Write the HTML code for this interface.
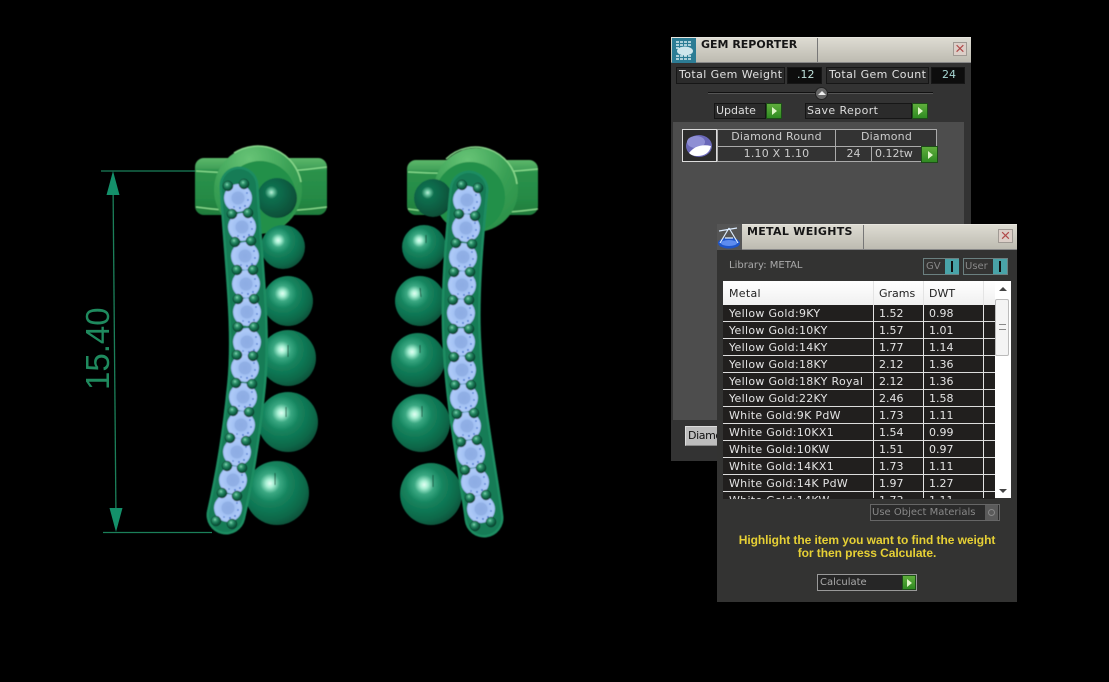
<!DOCTYPE html>
<html><head><meta charset="utf-8"><style>
html,body{margin:0;padding:0;background:#000;width:1109px;height:682px;overflow:hidden}
body{position:relative;font-family:"DejaVu Sans","Liberation Sans",sans-serif;font-size:11px;color:#ddd}
.a{position:absolute;box-sizing:border-box}
.t{position:absolute;white-space:nowrap;line-height:14px}
.box{position:absolute;box-sizing:border-box;border:1px solid #161616;background:#2b2b2b}
.g{position:absolute;box-sizing:border-box;background:linear-gradient(#5fae3c,#2f8a22);border:1px solid #1d4d18}
.g:after{content:"";position:absolute;left:50%;top:50%;margin:-4px 0 0 -2px;border-left:5px solid #dff5c8;border-top:4px solid transparent;border-bottom:4px solid transparent}
.title{background:linear-gradient(#dddbd2,#bdbbb1);border-top:1px solid #e8e6df;border-bottom:1px solid #888}
.x{position:absolute;box-sizing:border-box;border:1px solid #a09a94;background:#dccfc8;color:#b04848;text-align:center;font-size:17px;line-height:12px;font-family:"Liberation Sans",sans-serif}
.r{position:absolute;left:723px;width:272px;height:17px;background:#211f1e;border-bottom:1px solid #ddd;box-sizing:border-box;color:#e4e4e4}
.r span{position:absolute;top:2px;line-height:14px;white-space:nowrap}
.r span:nth-child(1){left:6px;letter-spacing:.3px}.r span:nth-child(2){left:156px}.r span:nth-child(3){left:206px}
</style></head><body>

<svg class="a" style="left:0;top:0" width="660" height="682" viewBox="0 0 660 682">
<defs>
<filter id="soft" x="-5%" y="-5%" width="110%" height="110%"><feGaussianBlur stdDeviation=".55"/></filter>
<radialGradient id="s" cx=".39" cy=".35" r=".78">
<stop offset="0" stop-color="#e4fff4"/><stop offset=".08" stop-color="#a8f0d4"/><stop offset=".2" stop-color="#3aa882"/><stop offset=".38" stop-color="#14845e"/><stop offset=".72" stop-color="#0d6849"/><stop offset=".93" stop-color="#0a4a35"/><stop offset="1" stop-color="#04241a"/>
</radialGradient>
<radialGradient id="sd" cx=".36" cy=".36" r=".8">
<stop offset="0" stop-color="#c0f2dc"/><stop offset=".08" stop-color="#68c4a0"/><stop offset=".2" stop-color="#11704f"/><stop offset=".8" stop-color="#0a4f38"/><stop offset="1" stop-color="#05281c"/>
</radialGradient>
<radialGradient id="p" cx=".4" cy=".35" r=".7">
<stop offset="0" stop-color="#8fe0bc"/><stop offset=".22" stop-color="#3a9e78"/><stop offset=".55" stop-color="#156f4e"/><stop offset="1" stop-color="#07392a"/>
</radialGradient>
<radialGradient id="gm" cx=".5" cy=".5" r=".5">
<stop offset="0" stop-color="#8fb0e8"/><stop offset=".45" stop-color="#a0bff2"/><stop offset=".85" stop-color="#aecaf8"/><stop offset="1" stop-color="#9cbcf4"/>
</radialGradient>
<linearGradient id="band" x1="0" y1="0" x2="0" y2="1">
<stop offset="0" stop-color="#5cb86a"/><stop offset=".17" stop-color="#44a25a"/><stop offset=".22" stop-color="#2b924b"/><stop offset=".7" stop-color="#258a45"/><stop offset="1" stop-color="#1f7c3c"/>
</linearGradient>
<radialGradient id="disc" cx=".4" cy=".15" r=".9">
<stop offset="0" stop-color="#68c476"/><stop offset=".55" stop-color="#389f54"/><stop offset="1" stop-color="#2a9049"/>
</radialGradient>
<g id="gem">
<circle r="14" fill="url(#gm)"/>
<circle r="6.500" fill="#8cabe2" opacity=".75"/>
<g fill="#3f6cc8" opacity=".85">
<circle cx="9" cy="-5" r=".9"/><circle cx="10" cy="2" r=".9"/><circle cx="7" cy="8" r="1"/><circle cx="2" cy="10" r="1"/><circle cx="-4" cy="9" r=".8"/>
</g>
</g>
<circle id="pr" r="5" fill="url(#p)" stroke="#062d20" stroke-width=".5"/>
</defs>

<!-- dimension -->
<g stroke="#1b7f59" fill="none">
<path d="M101 171H198M103 532.5H212" stroke-width="1.2"/>
<path d="M113 180L116 520" stroke-width="1.3"/>
</g>
<path d="M113 171L106.500 195H119.500Z M116 532L109.500 508H122.500Z" fill="#14906a"/>
<text transform="translate(109,390) rotate(-90)" font-family="Liberation Sans,sans-serif" font-size="33" fill="#1f8a5e">15.40</text>

<g filter="url(#soft)">
<!-- left earring -->
<rect x="195" y="158" width="132" height="57" rx="9" fill="url(#band)"/>
<path d="M196 171Q260 176 327 167M196 207Q260 216 327 207" stroke="#8ade8f" stroke-width="1.300" fill="none"/>
<circle cx="258" cy="190" r="44" fill="url(#disc)"/>
<circle cx="260" cy="197" r="36" fill="#23904a"/>
<path d="M234 153A44 44 0 0 1 301 182" stroke="#88d88c" stroke-width="1.500" fill="none"/>
<circle cx="283" cy="247" r="22" fill="url(#s)"/>
<circle cx="288" cy="301" r="25" fill="url(#s)"/>
<circle cx="288" cy="358" r="28" fill="url(#s)"/>
<circle cx="288" cy="422" r="30" fill="url(#s)"/>
<circle cx="277" cy="493" r="32" fill="url(#s)"/>
<circle cx="277" cy="198" r="20" fill="url(#sd)"/>
<path d="M288 345V357M286 407V417M275 473V485" stroke="#0a4a34" stroke-width="1"/>
<path d="M239 186C243 260 253 330 246 390C241 440 234 480 226 515" stroke="#1f8d62" stroke-width="39" stroke-linecap="round" fill="none"/>
<path d="M239 186C243 260 253 330 246 390C241 440 234 480 226 515" stroke="#127c56" stroke-width="34" stroke-linecap="round" fill="none"/>
<use href="#gem" x="238" y="198"/><use href="#gem" x="242" y="227"/><use href="#gem" x="245" y="256"/><use href="#gem" x="246" y="284"/><use href="#gem" x="247" y="312"/><use href="#gem" x="247" y="342"/><use href="#gem" x="245" y="368"/><use href="#gem" x="243" y="397"/><use href="#gem" x="241" y="425"/><use href="#gem" x="237" y="452"/><use href="#gem" x="233" y="480"/><use href="#gem" x="228" y="508"/>
<use href="#pr" x="228" y="186"/><use href="#pr" x="244" y="184"/><use href="#pr" x="232" y="214"/><use href="#pr" x="248" y="213"/><use href="#pr" x="235" y="242"/><use href="#pr" x="251" y="241"/><use href="#pr" x="237" y="270"/><use href="#pr" x="253" y="270"/><use href="#pr" x="238" y="299"/><use href="#pr" x="254" y="299"/><use href="#pr" x="238" y="327"/><use href="#pr" x="254" y="327"/><use href="#pr" x="237" y="355"/><use href="#pr" x="253" y="356"/><use href="#pr" x="236" y="383"/><use href="#pr" x="252" y="384"/><use href="#pr" x="233" y="411"/><use href="#pr" x="249" y="412"/><use href="#pr" x="230" y="438"/><use href="#pr" x="246" y="441"/><use href="#pr" x="227" y="466"/><use href="#pr" x="242" y="468"/><use href="#pr" x="222" y="493"/><use href="#pr" x="237" y="496"/><use href="#pr" x="216" y="521"/><use href="#pr" x="232" y="524"/>

<!-- right earring -->
<rect x="407" y="160" width="131" height="55" rx="9" fill="url(#band)"/>
<path d="M408 172Q470 176 538 169M408 209Q470 218 538 209" stroke="#8ade8f" stroke-width="1.300" fill="none"/>
<circle cx="476" cy="190" r="42" fill="url(#disc)"/>
<circle cx="470" cy="197" r="35" fill="#23904a"/>
<path d="M446 159A42 42 0 0 1 517 184" stroke="#88d88c" stroke-width="1.500" fill="none"/>
<circle cx="433" cy="198" r="19" fill="url(#sd)"/>
<circle cx="424" cy="247" r="22" fill="url(#s)"/>
<circle cx="420" cy="301" r="25" fill="url(#s)"/>
<circle cx="418" cy="360" r="27" fill="url(#s)"/>
<circle cx="421" cy="423" r="29" fill="url(#s)"/>
<circle cx="431" cy="494" r="31" fill="url(#s)"/>
<path d="M426 235V243M420 288L421 297M420 345V353M422 406V417M433 475V487" stroke="#0a4a34" stroke-width="1"/>
<path d="M469 190C464 240 459 300 462 345C465 410 478 470 484 518" stroke="#1f8d62" stroke-width="39" stroke-linecap="round" fill="none"/>
<path d="M469 190C464 240 459 300 462 345C465 410 478 470 484 518" stroke="#127c56" stroke-width="34" stroke-linecap="round" fill="none"/>
<use href="#gem" x="467" y="200"/><use href="#gem" x="466" y="228"/><use href="#gem" x="463" y="257"/><use href="#gem" x="462" y="285"/><use href="#gem" x="461" y="313"/><use href="#gem" x="461" y="342"/><use href="#gem" x="462" y="370"/><use href="#gem" x="464" y="398"/><use href="#gem" x="467" y="426"/><use href="#gem" x="471" y="454"/><use href="#gem" x="475" y="482"/><use href="#gem" x="481" y="509"/>
<use href="#pr" x="462" y="185"/><use href="#pr" x="478" y="188"/><use href="#pr" x="459" y="214"/><use href="#pr" x="475" y="216"/><use href="#pr" x="456" y="243"/><use href="#pr" x="472" y="244"/><use href="#pr" x="454" y="272"/><use href="#pr" x="470" y="272"/><use href="#pr" x="453" y="300"/><use href="#pr" x="469" y="300"/><use href="#pr" x="453" y="329"/><use href="#pr" x="469" y="329"/><use href="#pr" x="454" y="357"/><use href="#pr" x="470" y="357"/><use href="#pr" x="455" y="385"/><use href="#pr" x="471" y="385"/><use href="#pr" x="457" y="414"/><use href="#pr" x="474" y="413"/><use href="#pr" x="461" y="442"/><use href="#pr" x="477" y="440"/><use href="#pr" x="465" y="470"/><use href="#pr" x="481" y="468"/><use href="#pr" x="470" y="498"/><use href="#pr" x="486" y="495"/><use href="#pr" x="475" y="526"/><use href="#pr" x="491" y="522"/>
</g>
</svg>

<!-- GEM REPORTER -->
<div class="a" style="left:671px;top:37px;width:300px;height:424px;background:#333"></div>
<div class="a title" style="left:671px;top:37px;width:300px;height:26px"></div>
<div class="a" style="left:817px;top:38px;width:1px;height:24px;background:#777"></div>
<svg class="a" style="left:672px;top:38px" width="24" height="25" viewBox="0 0 24 25">
<rect width="24" height="25" fill="#2c7c94"/>
<path d="M4 4H20M4 7H20M4 10H11M4 18H20M4 21H20" stroke="#d8ecf2" stroke-width="1.400" stroke-dasharray="3 1"/>
<ellipse cx="13" cy="13" rx="8" ry="4.500" fill="#cfe6ec"/>
</svg>
<div class="t" style="left:701px;top:38px;font-weight:bold;color:#161616;font-size:11px">GEM REPORTER</div>
<div class="x" style="left:953px;top:42px;width:14px;height:14px">×</div>

<div class="box" style="left:676px;top:67px;width:109px;height:17px"></div>
<div class="t" style="left:679px;top:68px;color:#e2e2e2;letter-spacing:.4px">Total Gem Weight</div>
<div class="box" style="left:787px;top:67px;width:35px;height:17px;background:#0d0d0d"></div>
<div class="t" style="left:797px;top:68px;color:#bfe0da">.12</div>
<div class="box" style="left:826px;top:67px;width:103px;height:17px"></div>
<div class="t" style="left:829px;top:68px;color:#e2e2e2;letter-spacing:.4px">Total Gem Count</div>
<div class="box" style="left:931px;top:67px;width:34px;height:17px;background:#0d0d0d"></div>
<div class="t" style="left:942px;top:68px;color:#a8d8d4">24</div>

<div class="a" style="left:708px;top:92px;width:225px;height:2px;background:#111;border-bottom:1px solid #555"></div>
<div class="a" style="left:815px;top:87px;width:13px;height:13px;border-radius:50%;background:#666;border:1px solid #222"></div>
<div class="a" style="left:818px;top:91px;border-left:4px solid transparent;border-right:4px solid transparent;border-bottom:4px solid #eee"></div>

<div class="box" style="left:714px;top:103px;width:52px;height:16px"></div>
<div class="t" style="left:716px;top:104px">Update</div>
<div class="g" style="left:766px;top:103px;width:16px;height:16px"></div>
<div class="box" style="left:805px;top:103px;width:107px;height:16px"></div>
<div class="t" style="left:807px;top:104px;letter-spacing:.4px">Save Report</div>
<div class="g" style="left:912px;top:103px;width:16px;height:16px"></div>

<div class="a" style="left:673px;top:122px;width:291px;height:298px;background:#4d4d4d"></div>
<div class="a" style="left:682px;top:129px;width:35px;height:33px;background:#2c2c2c;border:1px solid #ddd"></div>
<svg class="a" style="left:683px;top:131px" width="33" height="30" viewBox="0 0 33 30">
<ellipse cx="16" cy="15" rx="13" ry="11" fill="#6a68b8"/>
<ellipse cx="13" cy="11" rx="9" ry="6" fill="#8f8fd4"/>
<path d="M6 22Q14 12 28 15Q26 25 14 25Q9 25 6 22Z" fill="#fff"/>
</svg>
<div class="a" style="left:717px;top:129px;width:220px;height:33px;background:#333;border:1px solid #aaa"></div>
<div class="a" style="left:718px;top:146px;width:218px;height:1px;background:#aaa"></div>
<div class="a" style="left:835px;top:130px;width:1px;height:31px;background:#aaa"></div>
<div class="a" style="left:871px;top:147px;width:1px;height:14px;background:#aaa"></div>
<div class="t" style="left:718px;top:130px;width:117px;text-align:center;color:#ccc;letter-spacing:.2px">Diamond Round</div>
<div class="t" style="left:836px;top:130px;width:101px;text-align:center;color:#ccc;letter-spacing:.2px">Diamond</div>
<div class="t" style="left:718px;top:147px;width:117px;text-align:center;color:#ccc;letter-spacing:.2px">1.10 X 1.10</div>
<div class="t" style="left:836px;top:147px;width:35px;text-align:center;color:#ccc">24</div>
<div class="t" style="left:875px;top:147px;color:#ccc">0.12tw</div>
<div class="g" style="left:921px;top:146px;width:17px;height:17px"></div>

<div class="a" style="left:685px;top:426px;width:40px;height:20px;background:#bdbdbd;border:1px solid #8a8a8a;border-top-color:#ddd;border-left-color:#ddd"></div>
<div class="t" style="left:688px;top:429px;color:#111;letter-spacing:-.4px">Diamo</div>

<!-- METAL WEIGHTS -->
<div class="a" style="left:717px;top:224px;width:300px;height:378px;background:#333332"></div>
<div class="a title" style="left:742px;top:224px;width:275px;height:26px"></div>
<div class="a" style="left:717px;top:224px;width:25px;height:26px;background:#555"></div>
<div class="a" style="left:863px;top:225px;width:1px;height:24px;background:#777"></div>
<svg class="a" style="left:717px;top:225px" width="25" height="25" viewBox="0 0 25 25">
<ellipse cx="12" cy="18" rx="11" ry="5.500" fill="#1f55c8"/>
<path d="M12 3L3 18M12 3L21 18M2 6L20 3M8 13H16" stroke="#dcecff" stroke-width="1.200" fill="none"/>
<ellipse cx="12" cy="18" rx="8" ry="3" fill="#5d8cf0"/>
</svg>
<div class="t" style="left:747px;top:225px;font-weight:bold;color:#161616;font-size:11px;letter-spacing:.3px">METAL WEIGHTS</div>
<div class="x" style="left:998px;top:229px;width:15px;height:14px">×</div>

<div class="t" style="left:729px;top:259px;font-size:10px;color:#aaa">Library: METAL</div>
<div class="a" style="left:923px;top:258px;width:36px;height:17px;border:1px solid #6b8080"></div>
<div class="t" style="left:926px;top:260px;font-size:10px;color:#888">GV</div>
<div class="a" style="left:945px;top:259px;width:14px;height:15px;background:#49a3a8"></div>
<div class="a" style="left:951px;top:261px;width:2px;height:11px;background:#111"></div>
<div class="a" style="left:963px;top:258px;width:45px;height:17px;border:1px solid #6b8080"></div>
<div class="t" style="left:965px;top:260px;font-size:10px;color:#888">User</div>
<div class="a" style="left:993px;top:259px;width:14px;height:15px;background:#49a3a8"></div>
<div class="a" style="left:999px;top:261px;width:2px;height:11px;background:#111"></div>

<div class="a" style="left:723px;top:281px;width:288px;height:217px;background:#fff"></div>
<div class="a" style="left:723px;top:281px;width:272px;height:24px;background:linear-gradient(#fff,#f0f0f0);color:#222"></div>
<div class="t" style="left:729px;top:287px;color:#222;letter-spacing:.3px">Metal</div>
<div class="t" style="left:879px;top:287px;color:#222">Grams</div>
<div class="t" style="left:929px;top:287px;color:#222">DWT</div>

<div class="a" style="left:0;top:0;width:1109px;height:499px;overflow:hidden">
<div class="r" style="top:305px"><span>Yellow Gold:9KY</span><span>1.52</span><span>0.98</span></div>
<div class="r" style="top:322px"><span>Yellow Gold:10KY</span><span>1.57</span><span>1.01</span></div>
<div class="r" style="top:339px"><span>Yellow Gold:14KY</span><span>1.77</span><span>1.14</span></div>
<div class="r" style="top:356px"><span>Yellow Gold:18KY</span><span>2.12</span><span>1.36</span></div>
<div class="r" style="top:373px"><span>Yellow Gold:18KY Royal</span><span>2.12</span><span>1.36</span></div>
<div class="r" style="top:390px"><span>Yellow Gold:22KY</span><span>2.46</span><span>1.58</span></div>
<div class="r" style="top:407px"><span>White Gold:9K PdW</span><span>1.73</span><span>1.11</span></div>
<div class="r" style="top:424px"><span>White Gold:10KX1</span><span>1.54</span><span>0.99</span></div>
<div class="r" style="top:441px"><span>White Gold:10KW</span><span>1.51</span><span>0.97</span></div>
<div class="r" style="top:458px"><span>White Gold:14KX1</span><span>1.73</span><span>1.11</span></div>
<div class="r" style="top:475px"><span>White Gold:14K PdW</span><span>1.97</span><span>1.27</span></div>
<div class="r" style="top:492px"><span>White Gold:14KW</span><span>1.73</span><span>1.11</span></div>
</div>
<div class="a" style="left:873px;top:281px;width:1px;height:217px;background:#e4e4e4"></div>
<div class="a" style="left:923px;top:281px;width:1px;height:217px;background:#e4e4e4"></div>
<div class="a" style="left:983px;top:281px;width:1px;height:217px;background:#e4e4e4"></div>
<div class="a" style="left:995px;top:299px;width:14px;height:57px;background:#f4f4f4;border:1px solid #bbb;border-radius:2px"></div>
<div class="a" style="left:999px;top:324px;width:7px;height:6px;border-top:1px solid #888;border-bottom:1px solid #888"></div>
<div class="a" style="left:999px;top:287px;border-left:4px solid transparent;border-right:4px solid transparent;border-bottom:4px solid #444"></div>
<div class="a" style="left:999px;top:489px;border-left:4px solid transparent;border-right:4px solid transparent;border-top:4px solid #444"></div>

<div class="a" style="left:870px;top:504px;width:130px;height:17px;border:1px solid #666;background:#2b2b2b"></div>
<div class="t" style="left:872px;top:506px;font-size:10px;color:#888">Use Object Materials</div>
<div class="a" style="left:985px;top:505px;width:13px;height:15px;background:#5a5a5a"></div>
<div class="a" style="left:988px;top:509px;width:7px;height:7px;border-radius:50%;border:1px solid #888"></div>

<div class="t" style="left:717px;top:534px;width:300px;text-align:center;font-family:'Liberation Sans',sans-serif;font-weight:bold;font-size:12px;line-height:13px;color:#e6d035;white-space:normal;letter-spacing:-.06px">Highlight the item you want to find the weight<br>for then press Calculate.</div>

<div class="a" style="left:817px;top:574px;width:100px;height:17px;border:1px solid #999;background:#262626"></div>
<div class="t" style="left:820px;top:576px;font-size:10px;color:#aaa">Calculate</div>
<div class="g" style="left:902px;top:575px;width:14px;height:15px"></div>
</body></html>
